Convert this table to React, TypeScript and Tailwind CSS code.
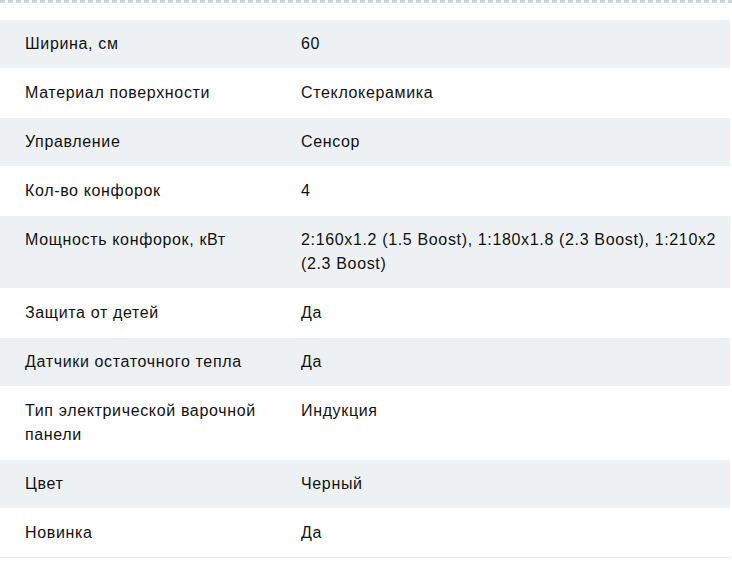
const specs: [string, string][] = [
  ["Ширина, см", "60"],
  ["Материал поверхности", "Стеклокерамика"],
  ["Управление", "Сенсор"],
  ["Кол-во конфорок", "4"],
  ["Мощность конфорок, кВт", "2:160x1.2 (1.5 Boost), 1:180x1.8 (2.3 Boost), 1:210x2 (2.3 Boost)"],
  ["Защита от детей", "Да"],
  ["Датчики остаточного тепла", "Да"],
  ["Тип электрической варочной панели", "Индукция"],
  ["Цвет", "Черный"],
  ["Новинка", "Да"],
];

export default function App() {
  return (
    <div className="w-[732px] h-[574px] bg-white font-['Liberation_Sans',Arial,sans-serif] text-[16px] tracking-[0.65px] text-[#111]">
      {/* dashed separator */}
      <div className="h-[3px] w-full bg-[repeating-linear-gradient(90deg,#cdd5dc_0_5px,transparent_5px_8px)]" />
      <div className="mt-[17px] w-[730px]">
        {specs.map(([name, value], i) => (
          <div
            key={name}
            className={`grid grid-cols-[301px_1fr] border-b ${
              i === specs.length - 1 ? "border-[#e6e8eb]" : "border-white"
            } ${i % 2 === 0 ? "bg-[#edf1f4]" : "bg-white"}`}
          >
            <div className="pl-[25px] pr-[25px] py-3 leading-6">{name}</div>
            <div className="pr-[6px] py-3 leading-6">{value}</div>
          </div>
        ))}
      </div>
    </div>
  );
}
